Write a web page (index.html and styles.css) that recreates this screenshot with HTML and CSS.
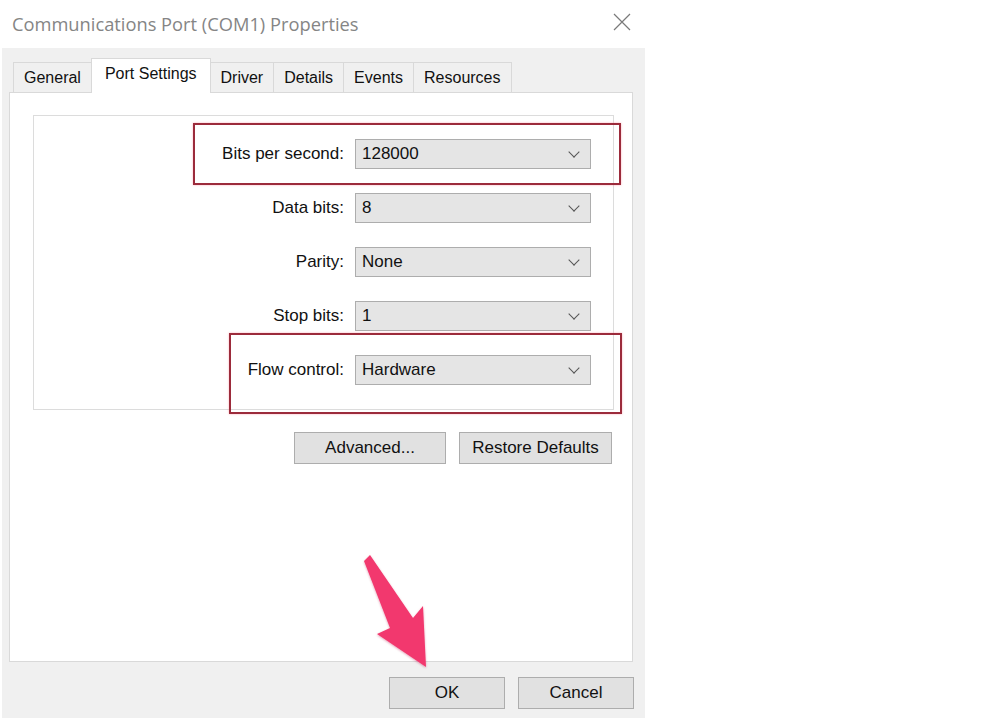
FILE: index.html
```html
<!DOCTYPE html>
<html lang="en">
<head>
    <meta charset="UTF-8">
    <meta name="viewport" content="width=device-width, initial-scale=1.0">
    <title>Communications Port (COM1) Properties</title>
    <link rel="stylesheet" href="styles.css">
</head>
<body>
    <div class="window">
        <div class="titlebar">
            <span class="title">Communications Port (COM1) Properties</span>
            <svg class="close" width="18" height="18" viewBox="0 0 18 18">
                <path d="M1 1 L17 17 M17 1 L1 17" stroke="#7a7a7a" stroke-width="1.2" fill="none"/>
            </svg>
        </div>
        <div class="dialog">
            <div class="tabs">
                <div class="tab">General</div>
                <div class="tab active">Port Settings</div>
                <div class="tab">Driver</div>
                <div class="tab">Details</div>
                <div class="tab">Events</div>
                <div class="tab">Resources</div>
            </div>
            <div class="panel">
                <div class="group">
                    <label>Bits per second:</label>
                    <div class="combo"><span>128000</span><i class="chev"></i></div>
                    <label>Data bits:</label>
                    <div class="combo"><span>8</span><i class="chev"></i></div>
                    <label>Parity:</label>
                    <div class="combo"><span>None</span><i class="chev"></i></div>
                    <label>Stop bits:</label>
                    <div class="combo"><span>1</span><i class="chev"></i></div>
                    <label>Flow control:</label>
                    <div class="combo"><span>Hardware</span><i class="chev"></i></div>

                    <div class="mark mark-baud"></div>
                    <div class="mark mark-flow"></div>
                </div>
                <div class="actions">
                    <button class="btn btn-adv">Advanced...</button>
                    <button class="btn btn-restore">Restore Defaults</button>
                </div>
            </div>
            <div class="footer">
                <button class="btn btn-ok">OK</button>
                <button class="btn btn-cancel">Cancel</button>
            </div>
        </div>
    </div>

    <svg class="pointer" width="1000" height="723" viewBox="0 0 1000 723">
        <defs>
            <filter id="soft" x="-20%" y="-20%" width="140%" height="140%">
                <feDropShadow dx="0" dy="1" stdDeviation="1.2" flood-color="#b0103c" flood-opacity="0.35"/>
            </filter>
        </defs>
        <polygon points="364,561 370,555 413,618 423,606 426,667 377,634 390,628" fill="#f2386e" filter="url(#soft)"/>
    </svg>
</body>
</html>
```

FILE: styles.css
```css
body {
    margin: 0;
    background: #fff;
    font-family: "Liberation Sans", Arial, sans-serif;
    font-size: 17px;
    color: #111;
}

.window {
    width: 646px;
}

.titlebar {
    height: 48px;
    display: flex;
    align-items: center;
    justify-content: space-between;
    padding: 0 15px 0 12px;
    box-sizing: border-box;
}

.title {
    font-family: "Open Sans", sans-serif;
    font-size: 18.3px;
    color: #858585;
    margin-top: -2px;
}

.close {
    margin-top: -4px;
}

.dialog {
    margin-left: 2px;
    width: 643px;
    height: 670px;
    background: #f0f0f0;
    padding: 10px 12px 0 7px;
    box-sizing: border-box;
}

.tabs {
    display: flex;
    align-items: flex-end;
    height: 34px;
    padding-left: 4px;
    position: relative;
    z-index: 1;
    font-size: 16px;
}

.tab {
    height: 30px;
    line-height: 30px;
    padding: 0 10px;
    border: 1px solid #d9d9d9;
    border-bottom: none;
    margin-left: -1px;
    box-sizing: border-box;
    background: #f0f0f0;
}

.tab:first-child {
    margin-left: 0;
}

.tab.active {
    height: 35px;
    line-height: 30px;
    margin-bottom: -1px;
    padding: 0 13px;
    background: #fff;
    position: relative;
}

.panel {
    height: 570px;
    border: 1px solid #d9d9d9;
    background: #fff;
    padding: 22px 18px 0 23px;
    box-sizing: border-box;
}

.group {
    position: relative;
    border: 1px solid #dcdcdc;
    padding: 23px 21px 24px 0;
    display: grid;
    grid-template-columns: 310px 236px;
    column-gap: 11px;
    row-gap: 24px;
}

.group label {
    text-align: right;
    align-self: center;
}

.combo {
    height: 30px;
    border: 1px solid #adadad;
    background: #e5e5e5;
    display: flex;
    align-items: center;
    justify-content: space-between;
    padding: 0 12px 0 6px;
    box-sizing: border-box;
}

.chev {
    width: 7px;
    height: 7px;
    border-right: 1.3px solid #555;
    border-bottom: 1.3px solid #555;
    transform: rotate(45deg);
    margin-top: -5px;
}

.mark {
    position: absolute;
    border: 2px solid #9c2b3b;
    box-shadow: 0 0 2px rgba(255, 120, 140, 0.6);
    box-sizing: border-box;
}

.mark-baud {
    left: 159px;
    top: 7px;
    width: 428px;
    height: 62px;
}

.mark-flow {
    left: 195px;
    top: 217px;
    width: 393px;
    height: 81px;
}

.actions {
    display: flex;
    justify-content: flex-end;
    gap: 13px;
    margin-top: 22px;
    margin-right: 2px;
}

.btn {
    height: 32px;
    border: 1px solid #adadad;
    background: #e1e1e1;
    font-family: "Liberation Sans", Arial, sans-serif;
    font-size: 17px;
    color: #111;
    padding: 0;
}

.btn-adv {
    width: 152px;
}

.btn-restore {
    width: 153px;
}

.footer {
    display: flex;
    justify-content: flex-end;
    gap: 13px;
    margin-top: 15px;
    margin-right: -1px;
}

.btn-ok,
.btn-cancel {
    width: 116px;
}

.pointer {
    position: absolute;
    top: 0;
    left: 0;
    pointer-events: none;
}
```
